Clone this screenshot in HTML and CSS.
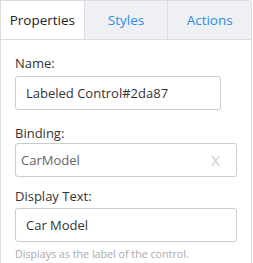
FILE: index.html
```html
<!DOCTYPE html>
<html lang="en">
<head>
    <meta charset="UTF-8">
    <title>Properties</title>
    <link rel="stylesheet" href="styles.css">
</head>
<body>
    <div class="panel">
        <div class="tabs">
            <div class="tab active">Properties</div>
            <div class="tab">Styles</div>
            <div class="tab">Actions</div>
        </div>
        <div class="content">
            <div class="field field-name">
                <label>Name:</label>
                <div class="input short">Labeled Control#2da87</div>
            </div>
            <div class="field field-binding">
                <label>Binding:</label>
                <div class="input binding">
                    <span>CarModel</span>
                    <span class="clear">X</span>
                </div>
            </div>
            <div class="field field-display">
                <label>Display Text:</label>
                <div class="input">Car Model</div>
                <p class="hint">Displays as the label of the control.</p>
            </div>
        </div>
    </div>
</body>
</html>
```

FILE: styles.css
```css
body {
    margin: 0;
    padding: 0;
    background-color: #fff;
    font-family: "Open Sans", Arial, sans-serif;
    color: #333;
}

.panel {
    width: 252px;
    height: 263px;
    box-sizing: border-box;
    border: 1px solid #d9dce1;
    border-bottom: none;
    border-top-right-radius: 4px;
    overflow: hidden;
}

.tabs {
    display: flex;
    height: 39px;
    box-sizing: border-box;
    border-bottom: 1px solid #d9dce1;
}

.tab {
    flex: 1;
    display: flex;
    align-items: center;
    justify-content: center;
    font-size: 13.5px;
    color: #2c8de4;
    background-color: #eef0f4;
    border-left: 1px solid #d9dce1;
}

.tab:first-child {
    border-left: none;
}

.tab.active {
    background-color: #fff;
    color: #222;
}

.content {
    padding: 14px 14px 0 14px;
}

.field label {
    display: block;
    font-size: 13px;
    line-height: 18px;
    color: #333;
}

.input {
    display: flex;
    align-items: center;
    justify-content: space-between;
    height: 34px;
    box-sizing: border-box;
    border: 1px solid #ccc;
    border-radius: 3px;
    padding: 0 10px;
    font-size: 13px;
    color: #333;
}

.input.short {
    width: 206px;
}

.field-name label {
    margin-bottom: 4px;
}

.field-binding {
    margin-top: 14px;
}

.field-binding label {
    margin-bottom: 1px;
}

.input.binding {
    padding-left: 5px;
    padding-right: 16px;
    color: #666;
}

.clear {
    color: #ccc;
    font-size: 15px;
}

.field-display {
    margin-top: 10px;
}

.field-display label {
    margin-bottom: 3px;
}

.hint {
    margin: 5px 0 0 0;
    font-size: 10.7px;
    color: #aaa;
}
```
